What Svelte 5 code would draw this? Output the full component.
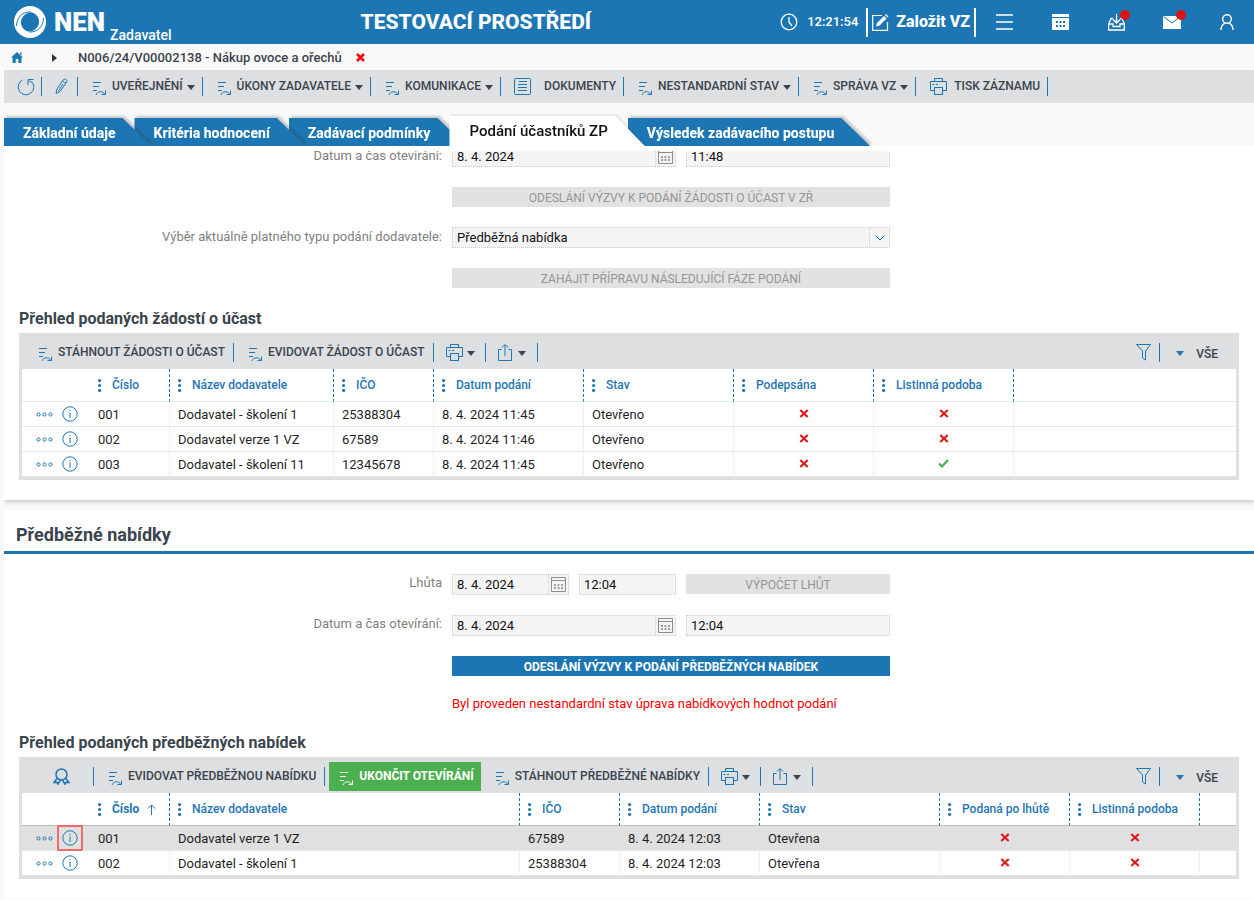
<script>
  const menu = [
    { label: 'UVEŘEJNĚNÍ', icon: 'action', caret: true },
    { label: 'ÚKONY ZADAVATELE', icon: 'action', caret: true },
    { label: 'KOMUNIKACE', icon: 'action', caret: true },
    { label: 'DOKUMENTY', icon: 'list', caret: false },
    { label: 'NESTANDARDNÍ STAV', icon: 'action', caret: true },
    { label: 'SPRÁVA VZ', icon: 'action', caret: true },
    { label: 'TISK ZÁZNAMU', icon: 'print', caret: false }
  ];
  const tabs = ['Základní údaje', 'Kritéria hodnocení', 'Zadávací podmínky', 'Podání účastníků ZP', 'Výsledek zadávacího postupu'];
  let activeTab = $state(3);

  const requests = {
    columns: [
      { label: 'Číslo', width: 80 },
      { label: 'Název dodavatele', width: 164 },
      { label: 'IČO', width: 100 },
      { label: 'Datum podání', width: 150 },
      { label: 'Stav', width: 150 },
      { label: 'Podepsána', width: 140 },
      { label: 'Listinná podoba', width: 140 }
    ],
    rows: [
      ['001', 'Dodavatel - školení 1', '25388304', '8. 4. 2024 11:45', 'Otevřeno', false, false],
      ['002', 'Dodavatel verze 1 VZ', '67589', '8. 4. 2024 11:46', 'Otevřeno', false, false],
      ['003', 'Dodavatel - školení 11', '12345678', '8. 4. 2024 11:45', 'Otevřeno', false, true]
    ],
    selected: -1
  };
  const offers = {
    columns: [
      { label: 'Číslo', width: 80, sorted: true },
      { label: 'Název dodavatele', width: 350 },
      { label: 'IČO', width: 100 },
      { label: 'Datum podání', width: 140 },
      { label: 'Stav', width: 180 },
      { label: 'Podaná po lhůtě', width: 130 },
      { label: 'Listinná podoba', width: 130 }
    ],
    rows: [
      ['001', 'Dodavatel verze 1 VZ', '67589', '8. 4. 2024 12:03', 'Otevřena', false, false],
      ['002', 'Dodavatel - školení 1', '25388304', '8. 4. 2024 12:03', 'Otevřena', false, false]
    ],
    selected: 0
  };
</script>

{#snippet icon(name)}
  {#if name === 'action'}
    <svg class="ic-action" width="14" height="15" viewBox="0 0 14 15" fill="none" stroke="currentColor" aria-hidden="true">
      <path d="M0 1.500h8M0 5.500h6M0 9.500h4" />
      <path d="M3 14c1.500-4 6.500-4.500 9-.5M12.500 9.500v4h-4" />
    </svg>
  {:else if name === 'list'}
    <svg class="ic-list" width="17" height="17" viewBox="0 0 17 17" fill="none" stroke="currentColor" aria-hidden="true">
      <rect x=".5" y=".5" width="16" height="16" rx="1" />
      <path d="M5 3.500h8M4 6.500h9M4 9.500h9M4 12.500h9" />
    </svg>
  {:else if name === 'print'}
    <svg class="ic-print" width="17" height="17" viewBox="0 0 17 17" fill="none" stroke="currentColor" aria-hidden="true">
      <path d="M4.500 3.500v-3h8v3M4.500 12.500h-4v-9h16v9h-4" />
      <rect x="4.500" y="9.500" width="8" height="7" />
      <path d="M2.500 6.500h2M6 6.500h2" />
    </svg>
  {:else if name === 'share'}
    <svg class="ic-print" width="14" height="17" viewBox="0 0 14 17" fill="none" stroke="currentColor" aria-hidden="true">
      <path d="M3.500 5.500h-3v11h13v-11h-3M7 12V1M4 3.500l3-3 3 3" />
    </svg>
  {:else if name === 'filter'}
    <svg width="15" height="17" viewBox="0 0 15 17" fill="none" stroke="currentColor" aria-hidden="true">
      <path d="M.5.5h14L9.500 7v9l-3-2V7z" />
    </svg>
  {:else if name === 'medal'}
    <svg width="17" height="17" viewBox="0 0 17 17" fill="none" stroke="currentColor" stroke-width="1.500" aria-hidden="true">
      <circle cx="8.500" cy="6.500" r="5.500" />
      <path d="M4 10.500l-3 4 3-.3 1 2 2.500-4M13 10.500l3 4-3-.3-1 2-2.500-4" />
    </svg>
  {:else if name === 'calendar'}
    <svg width="15" height="17" viewBox="0 0 15 17" fill="none" stroke="#8d8d8d" aria-hidden="true">
      <path d="M.5 1.500h14v14H.5zM.5 4.500h14" />
      <path d="M3 9h9M3 12h9" stroke-width="2" stroke-dasharray="2 1.500" stroke="#a0a0a0" />
    </svg>
  {:else if name === 'no'}
    <svg width="10" height="9" viewBox="0 0 10 9" stroke="#de1b1b" stroke-width="2.200" role="img" aria-label="Ne">
      <path d="M1.300 1l7.400 7M8.700 1L1.300 8" />
    </svg>
  {:else if name === 'yes'}
    <svg width="11" height="9" viewBox="0 0 11 9" fill="none" stroke="#4caf50" stroke-width="2.200" role="img" aria-label="Ano">
      <path d="M1 4.500l3 3L10 1" />
    </svg>
  {/if}
{/snippet}

{#snippet caret()}
  <svg class="caret" width="8" height="5" viewBox="0 0 8 5" fill="currentColor" aria-hidden="true"><path d="M0 0h8L4 5z" /></svg>
{/snippet}

{#snippet tool(label, name, hasCaret)}
  <button class="tool {name}">
    <span class="tool-icon">{@render icon(name)}</span>
    <span class="tool-text">{label}</span>
    {#if hasCaret}{@render caret()}{/if}
  </button>
{/snippet}

{#snippet gridTools()}
  <button class="tool small" aria-label="Tisk"><span class="tool-icon">{@render icon('print')}</span>{@render caret()}</button>
  <button class="tool small share" aria-label="Export"><span class="tool-icon">{@render icon('share')}</span>{@render caret()}</button>
  <div class="tools-right">
    <button class="filter" aria-label="Filtr">{@render icon('filter')}</button>
    <button class="all">{@render caret()}<span>VŠE</span></button>
  </div>
{/snippet}

{#snippet dataTable(data)}
  <table class:has-selected={data.selected === 0}>
    <colgroup>
      <col style="width: 68px" />
      {#each data.columns as c}<col style="width: {c.width}px" />{/each}
      <col />
    </colgroup>
    <thead>
      <tr>
        <td></td>
        {#each data.columns as c}
          <th scope="col">
            <div class="head" class:sorted={c.sorted}>
              <svg width="4" height="13" viewBox="0 0 4 13" fill="currentColor" aria-hidden="true">
                <circle cx="1.600" cy="1.600" r="1.600" /><circle cx="1.600" cy="6.500" r="1.600" /><circle cx="1.600" cy="11.400" r="1.600" />
              </svg>
              <span>{c.label}</span>
              {#if c.sorted}
                <svg width="9" height="11" viewBox="0 0 9 11" fill="none" stroke="currentColor" aria-hidden="true"><path d="M4.500 11V1M1 4.500l3.500-3.500L8 4.500" /></svg>
              {/if}
            </div>
          </th>
        {/each}
        <td></td>
      </tr>
    </thead>
    <tbody>
      {#each data.rows as row, i}
        <tr class:selected={i === data.selected}>
          <td class="actions">
            <div>
              <button aria-label="Více akcí">
                <svg width="17" height="5" viewBox="0 0 17 5" fill="none" stroke="currentColor" aria-hidden="true">
                  <circle cx="2.500" cy="2.500" r="1.600" /><circle cx="8.500" cy="2.500" r="1.600" /><circle cx="14.500" cy="2.500" r="1.600" />
                </svg>
              </button>
              <button class="info" aria-label="Detail">
                <svg width="16" height="16" viewBox="0 0 16 16" fill="none" stroke="currentColor" aria-hidden="true">
                  <circle cx="8" cy="8" r="7.200" /><path d="M8 6.500v5.500M8 4v1.200" />
                </svg>
              </button>
            </div>
          </td>
          {#each row as cell}
            {#if typeof cell === 'boolean'}
              <td class="flag">{@render icon(cell ? 'yes' : 'no')}</td>
            {:else}
              <td>{cell}</td>
            {/if}
          {/each}
          <td></td>
        </tr>
      {/each}
    </tbody>
  </table>
{/snippet}

{#snippet dateField(id, value)}
  <div class="field">
    <input {id} {value} />
    <button aria-label="Vybrat datum">{@render icon('calendar')}</button>
  </div>
{/snippet}

<header>
  <a class="brand" href="#home">
    <svg width="32" height="32" viewBox="0 0 32 32" aria-hidden="true">
      <path fill="#fff" fill-rule="evenodd" d="M16 0a16 16 0 1 0 0 32a16 16 0 1 0 0-32zM18 6.500a9.500 9.500 0 0 1 6 13.500a11 11 0 0 1-10 5.500a9.500 9.500 0 0 1-6-13.500a11 11 0 0 1 10-5.500z" />
      <path d="M2.500 20C2.500 12 8 5.500 17 6M29.500 12c0 8-5.500 14.500-14.500 14" fill="none" stroke="#1d76b4" />
    </svg>
    <strong>NEN</strong>
    <span>Zadavatel</span>
  </a>
  <h1>TESTOVACÍ PROSTŘEDÍ</h1>
  <div class="clock">
    <svg width="18" height="18" viewBox="0 0 18 18" fill="none" stroke="#fff" stroke-width="1.300" aria-hidden="true"><circle cx="9" cy="9" r="7.800" /><path d="M9 4v5l3 4" /></svg>
    <time>12:21:54</time>
  </div>
  <button class="create">
    <svg width="17" height="17" viewBox="0 0 17 17" aria-hidden="true">
      <path d="M10 1.500H.7v14.800h14.800V8" fill="none" stroke="#fff" stroke-width="1.200" />
      <path d="M4 12.500l1-3.500 7-7 2.500 2.500-7 7zM13 1l1-1 2.500 2.500-1 1z" fill="#fff" />
    </svg>
    <span>Založit VZ</span>
  </button>
  <nav>
    <button aria-label="Menu"><svg width="17" height="16" viewBox="0 0 17 16" stroke="#fff" stroke-width="1.500"><path d="M0 1h17M0 8h17M0 15h17" /></svg></button>
    <button aria-label="Kalendář">
      <svg width="17" height="16" viewBox="0 0 17 16"><path d="M0 0h17v3H0zM0 4h17v12H0z" fill="#fff" /><path d="M4 8h9M4 12h9" stroke="#1d76b4" stroke-width="2" stroke-dasharray="2 1.500" /></svg>
    </button>
    <button aria-label="Doručené">
      <svg width="17" height="17" viewBox="0 0 17 17" fill="none" stroke="#fff" stroke-width="1.300"><path d="M5 4.500H3L.7 10v6h15.600v-6L14 4.500h-2M.7 10H5v2.500h7V10h4.300M8.500 0v8.500M5 5.500l3.500 3.500L12 5.500" /></svg>
      <i class="dot"></i>
    </button>
    <button aria-label="Zprávy">
      <svg width="18" height="13" viewBox="0 0 18 13"><path d="M0 0h18v13H0z" fill="#fff" /><path d="M.5.5L9 7l8.500-6.500" fill="none" stroke="#1d76b4" /></svg>
      <i class="dot"></i>
    </button>
    <button aria-label="Uživatel"><svg width="14" height="16" viewBox="0 0 14 16" fill="none" stroke="#fff" stroke-width="1.400"><circle cx="7" cy="5" r="4.300" /><path d="M1 16c0-3.500 1.500-5.500 4-6.800M13 16c0-3.500-1.500-5.500-4-6.800" /></svg></button>
  </nav>
</header>

<nav class="crumbs" aria-label="Drobečková navigace">
  <a href="#home" aria-label="Domů"><svg width="12" height="11" viewBox="0 0 12 11" fill="#1d76b4"><path d="M6 0l6 5.500h-1.500V11H7.300V7H4.700v4H1.500V5.500H0zM9 .5h1.500v3L9 2z" /></svg></a>
  <svg class="crumb-arrow" width="5" height="8" viewBox="0 0 5 8" fill="#333"><path d="M0 0l5 4-5 4z" /></svg>
  <span>N006/24/V00002138 - Nákup ovoce a ořechů</span>
  <button aria-label="Zavřít"><svg width="9" height="9" viewBox="0 0 9 9" stroke="#f30b0b" stroke-width="2.600"><path d="M1 1l7 7M8 1L1 8" /></svg></button>
</nav>

<div class="toolbar main-tools">
  <button class="tool only reload" aria-label="Obnovit">
    <svg width="18" height="18" viewBox="0 0 18 18" fill="none" stroke="currentColor" aria-hidden="true"><path d="M5.500 2A7.800 7.800 0 1 0 14.500 3.500M11 7V1.500h5.500M11.500 2l3 3" /></svg>
  </button>
  <button class="tool only" aria-label="Upravit">
    <svg width="13" height="17" viewBox="0 0 13 17" fill="none" stroke="currentColor" aria-hidden="true"><path d="M1 15.500l1-4.500L8.500 1.500c1-1.200 4 .3 3.500 2L5 13.500zM7.500 3l3.500 2.200M8 6l-4.500 7" /></svg>
  </button>
  {#each menu as m}{@render tool(m.label, m.icon, m.caret)}{/each}
</div>

<div class="tabs" role="tablist">
  {#each tabs as t, i}
    <button role="tab" class:active={i === activeTab} aria-selected={i === activeTab} style="z-index: {i === activeTab ? 9 : 8 - i}" onclick={() => (activeTab = i)}>
      <span>{t}</span>
    </button>
  {/each}
</div>

<main>
  <section class="card first">
    <div class="clip">
      <div class="form pulled">
        <label for="open1">Datum a čas otevírání:</label>
        <div class="pair">
          {@render dateField('open1', '8. 4. 2024')}
          <div class="field"><input value="11:48" aria-label="Čas otevírání" /></div>
        </div>
        <button class="wide" disabled>ODESLÁNÍ VÝZVY K PODÁNÍ ŽÁDOSTI O ÚČAST V ZŘ</button>
        <label for="kind">Výběr aktuálně platného typu podání dodavatele:</label>
        <div class="field select">
          <select id="kind"><option>Předběžná nabídka</option></select>
          <span class="chevron"><svg width="10" height="6" viewBox="0 0 10 6" fill="none" stroke="#1d76b4"><path d="M.5.5L5 5 9.500.5" /></svg></span>
        </div>
        <button class="wide" disabled>ZAHÁJIT PŘÍPRAVU NÁSLEDUJÍCÍ FÁZE PODÁNÍ</button>
      </div>
    </div>
    <h3>Přehled podaných žádostí o účast</h3>
    <div class="grid">
      <div class="toolbar">
        {@render tool('STÁHNOUT ŽÁDOSTI O ÚČAST', 'action', false)}
        {@render tool('EVIDOVAT ŽÁDOST O ÚČAST', 'action', false)}
        {@render gridTools()}
      </div>
      {@render dataTable(requests)}
    </div>
  </section>

  <section class="card second">
    <h2>Předběžné nabídky</h2>
    <div class="form">
      <label for="term">Lhůta</label>
      <div class="triple">
        {@render dateField('term', '8. 4. 2024')}
        <div class="field"><input value="12:04" aria-label="Čas lhůty" /></div>
        <button disabled>VÝPOČET LHŮT</button>
      </div>
      <label for="open2">Datum a čas otevírání:</label>
      <div class="pair">
        {@render dateField('open2', '8. 4. 2024')}
        <div class="field"><input value="12:04" aria-label="Čas otevírání" /></div>
      </div>
      <button class="wide primary">ODESLÁNÍ VÝZVY K PODÁNÍ PŘEDBĚŽNÝCH NABÍDEK</button>
      <p>Byl proveden nestandardní stav úprava nabídkových hodnot podání</p>
    </div>
    <h3>Přehled podaných předběžných nabídek</h3>
    <div class="grid">
      <div class="toolbar">
        <button class="tool award" aria-label="Hodnocení">{@render icon('medal')}</button>
        {@render tool('EVIDOVAT PŘEDBĚŽNOU NABÍDKU', 'action', false)}
        <button class="finish"><span class="tool-icon">{@render icon('action')}</span><span class="tool-text">UKONČIT OTEVÍRÁNÍ</span></button>
        {@render tool('STÁHNOUT PŘEDBĚŽNÉ NABÍDKY', 'action', false)}
        {@render gridTools()}
      </div>
      {@render dataTable(offers)}
    </div>
  </section>
</main>

<style>
  :global(body) { background: #f9f9f9; }
  :global(#app) {
    --blue: #1d76b4;
    --grey: #dddfe1;
    --ink: #3a444d;
    font: 13px/16px Roboto, sans-serif;
    color: #1f1f1f;
  }
  button, input, select { font: inherit; color: inherit; margin: 0; padding: 0; border: 0; background: none; border-radius: 0; }
  button { cursor: pointer; }
  button:disabled { cursor: default; }
  svg { display: block; flex: none; }
  h1, h2, h3, p { margin: 0; }

  header { display: flex; align-items: center; height: 44px; background: var(--blue); color: #fff; }
  .brand { display: flex; align-items: center; padding-left: 14px; color: inherit; text-decoration: none; }
  .brand strong { font-size: 26px; font-weight: 900; margin-left: 8px; }
  .brand span { font-size: 14px; font-weight: 500; align-self: flex-end; padding-top: 26px; margin-left: 5px; }
  h1 { flex: 1; text-align: center; font-size: 21px; font-weight: 800; }
  .clock { display: flex; align-items: center; gap: 9px; margin-right: 8px; font-weight: 500; }
  .create { display: flex; align-items: center; gap: 7px; height: 29px; padding: 0 4px; border: solid #fff; border-width: 0 2px; font-size: 16px; font-weight: 800; }
  header nav { display: flex; }
  header nav button { position: relative; display: grid; place-items: center; width: 56px; height: 44px; }
  header nav button:last-child { width: 54px; }
  .dot { position: absolute; top: 10px; left: 32px; width: 10px; height: 10px; border-radius: 50%; background: #dc1414; }

  .crumbs { display: flex; align-items: center; height: 25px; padding: 1px 0 0 11px; font-weight: 500; color: var(--ink); }
  .crumb-arrow { margin: 0 21px 0 29px; }
  .crumbs button { margin-left: 14px; }

  .toolbar { display: flex; align-items: center; background: var(--grey); color: var(--ink); font-size: 12px; font-weight: 500; }
  .main-tools { height: 33px; margin-left: 4px; }
  .tool { display: flex; align-items: center; height: 19px; padding: 0 7px 0 15px; border-right: 1px solid var(--blue); white-space: nowrap; line-height: 16px; }
  .tool-text { padding-bottom: 2px; }
  .tool > svg:not(.caret), .tool-icon { color: var(--blue); }
  .tool-icon { width: 19px; }
  .tool .tool-icon .ic-action { margin-top: 4px; }
  .tool .caret { margin: 2px 0 0 4px; }
  .tool.only { padding: 0 9px 0 13px; }
  .tool.only.reload { padding-right: 6px; }
  .tool.list { padding-left: 13px; }
  .tool.print { padding-left: 14px; }
  .tool.list .tool-icon { width: 30px; }
  .tool.print .tool-icon { width: 24px; }
  .tool.small { padding: 0 10px 0 12px; }
  .tool.small .tool-icon { width: 17px; }
  .tool.small.share { padding-right: 11px; }
  .tool.small.share .tool-icon { width: 16px; }
  .grid .tool.award { padding: 0 23px 0 29px; }
  .tools-right { display: flex; margin-left: auto; color: var(--ink); }
  .filter { height: 19px; padding-right: 8px; border-right: 1px solid var(--blue); color: var(--blue); }
  .all { display: flex; align-items: center; gap: 12px; padding: 2px 18px 0 16px; }
  .all .caret { color: var(--blue); }
  .finish { display: flex; align-items: center; height: 29px; margin-left: 4px; padding: 0 7px 0 11px; background: #4caf50; color: #fff; font-weight: 700; border: 0; white-space: nowrap; }
  .finish .tool-icon { color: #fff; padding-top: 4px; }

  .tabs { display: flex; align-items: flex-end; height: 30px; padding: 13px 0 0 4px; isolation: isolate; }
  .tabs button { position: relative; height: 28px; padding: 2px 19px 0; font-size: 14px; font-weight: 800; color: #fff; white-space: nowrap; filter: drop-shadow(2px -2px 1px rgba(60, 50, 50, .25)); }
  .tabs button::before { content: ''; position: absolute; inset: 0 -17px 0 0; background: var(--blue); clip-path: polygon(0 0, calc(100% - 29px) 0, 100% 100%, 0 100%); }
  .tabs button.active { height: 30px; padding: 0 20px; color: #111; font-size: 15px; font-weight: 500; filter: drop-shadow(1px -1px 1px rgba(60, 50, 50, .15)); }
  .tabs button.active::before { background: #fff; }
  .tabs span { position: relative; }

  .card { margin-left: 4px; background: #fff; }
  .card.first { position: relative; padding: 5px 0 20px; margin-bottom: 10px; box-shadow: 0 2px 4px rgba(0, 0, 0, .2); clip-path: inset(0 0 -8px); }
  .card.second { padding-bottom: 20px; box-shadow: 0 1px 1px rgba(0, 0, 0, .04); }
  .clip { overflow: hidden; }
  .form { display: grid; grid-template-columns: minmax(0, 438fr) minmax(0, 438fr) minmax(0, 354fr); column-gap: 10px; row-gap: 20px; padding: 20px 0; }
  .form.pulled { margin-top: -5px; padding-top: 0; }
  .form label { grid-column: 1; text-align: right; color: #808080; line-height: 18px; }
  .form.pulled label { line-height: 20px; }
  .form > div, .wide, .form p { grid-column: 2; }
  .pair { display: grid; grid-template-columns: minmax(0, 224fr) minmax(0, 204fr); gap: 10px; }
  .triple { display: grid; grid-template-columns: minmax(0, 117fr) minmax(0, 97fr) minmax(0, 204fr); gap: 10px; }
  .form p { color: #fb0000; }
  .field { display: flex; height: 21px; box-sizing: border-box; border: 1px dotted #cbcbcb; background: #f4f4f4; color: #111; }
  .field input, .field select { flex: 1; min-width: 0; padding: 0 4px; appearance: none; outline: none; }
  .field button { display: grid; place-items: center; width: 20px; border-left: 1px dotted #cbcbcb; }
  .chevron { display: grid; place-items: center; width: 19px; border-left: 1px dotted #cbcbcb; pointer-events: none; }
  .form > button, .triple > button { height: 20px; padding-top: 1px; font-size: 12px; background: #e2e2e2; color: #959595; white-space: nowrap; }
  .form > button.primary { background: var(--blue); color: #fff; font-weight: 700; }
  h2 { padding: 15px 12px 6px; border-bottom: 3px solid var(--blue); font-size: 18px; line-height: 20px; font-weight: 700; color: var(--ink); }
  h3 { margin: 0 15px; padding: 1px 0 4px; font-size: 16px; line-height: 20px; font-weight: 700; color: var(--ink); }

  .grid { margin: 0 15px; padding: 0 3px 3px; background: var(--grey); }
  .grid .toolbar { box-sizing: border-box; height: 36px; padding: 3px 0 0 2px; }
  .grid .tool.action { padding-right: 8px; }
  table { width: 100%; table-layout: fixed; border-spacing: 0; background: #fff; }
  td, th { box-sizing: border-box; height: 25px; padding: 2px 0 0 8px; border-bottom: 1px solid #e0e8ec; text-align: left; white-space: nowrap; }
  tbody td:not(:first-child):not(:last-child) { border-right: 1px dotted #dfe3e6; }
  thead td, thead th { height: 33px; padding-top: 0; font-size: 12px; font-weight: 500; color: var(--blue); }
  thead th { border-right: 1px dashed var(--blue); }
  .head { display: flex; align-items: center; gap: 10px; }
  .head.sorted { gap: 8px; font-weight: 700; }
  .head.sorted span { margin-left: 2px; }
  .has-selected thead td, .has-selected thead th { border-bottom-color: #bcbcbc; }
  .selected td { background: #e0e0e0; }
  td.flag { padding: 0 0 2px; }
  .flag svg { margin: 0 auto; }
  td.actions { padding: 0 0 0 14px; color: var(--blue); }
  .actions div { display: flex; align-items: center; gap: 9px; }
  .info { position: relative; }
  .selected .info::after { content: ''; position: absolute; inset: -5px; border: 2px solid #f06a6a; border-radius: 1px; }
</style>
